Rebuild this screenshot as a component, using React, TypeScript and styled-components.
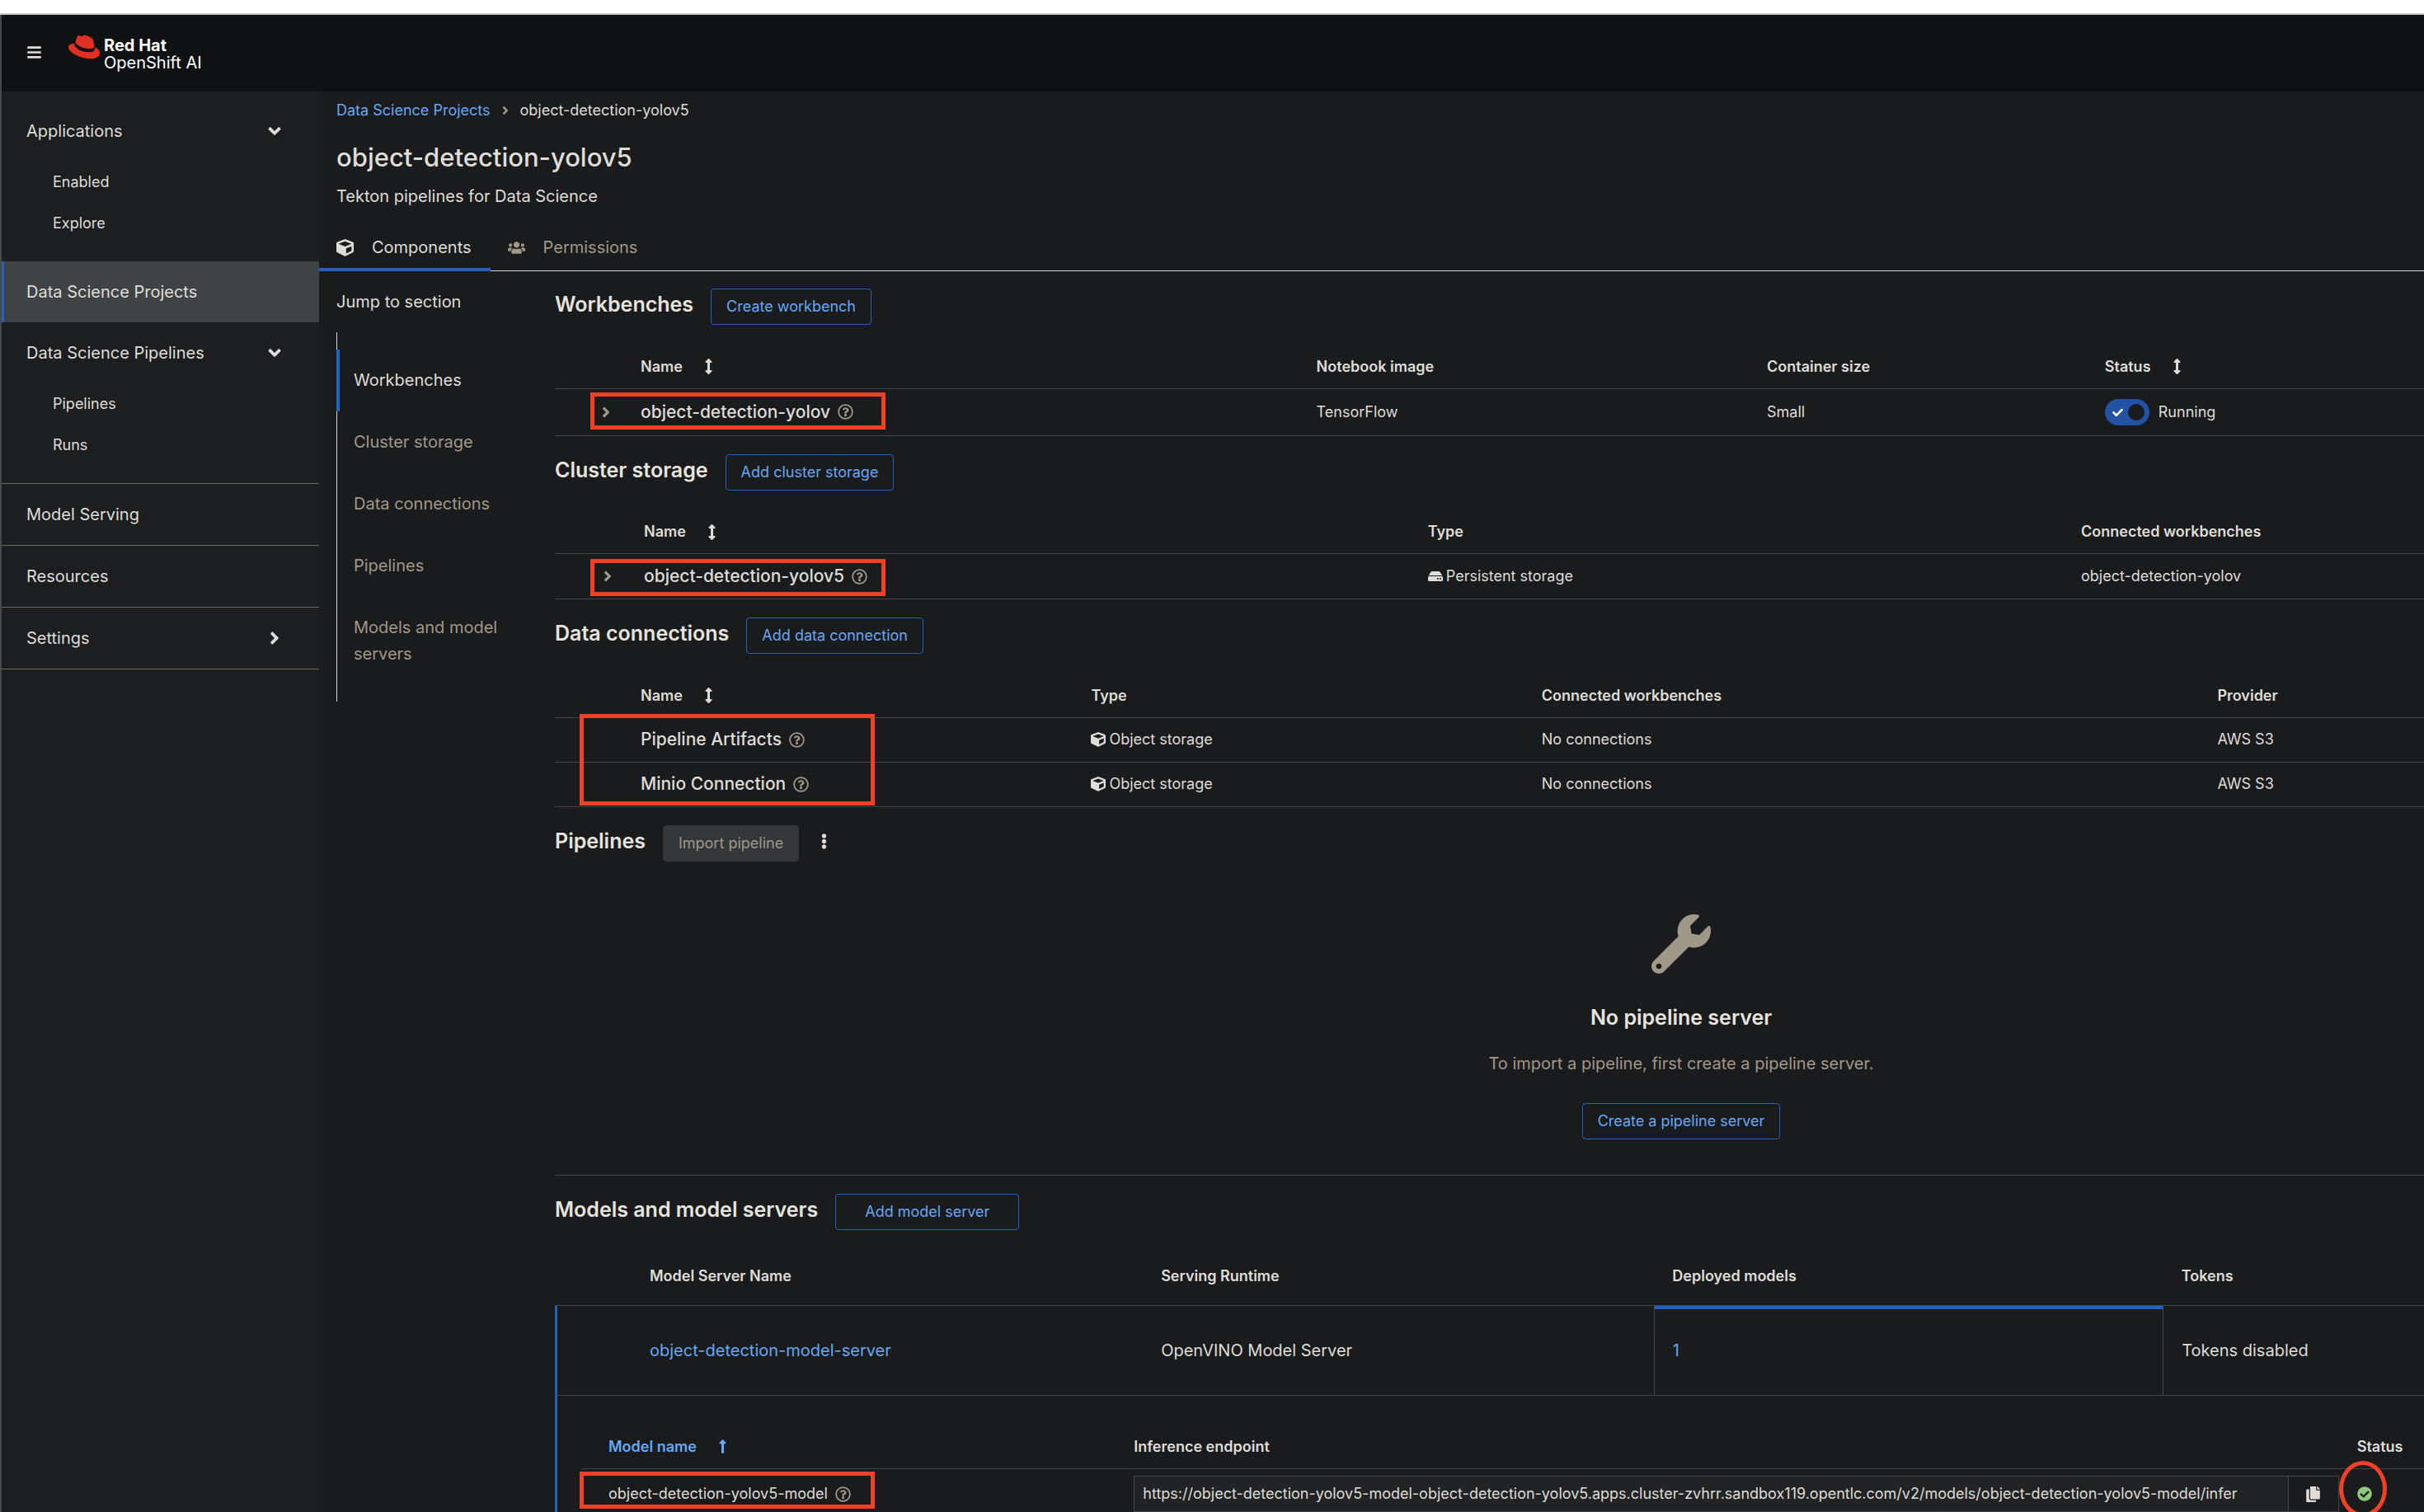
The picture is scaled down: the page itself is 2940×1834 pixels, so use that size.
import React from "react";
import styled, { createGlobalStyle, css } from "styled-components";
import {
  FaAngleDown,
  FaAngleRight,
  FaArrowsAltV,
  FaBars,
  FaCheck,
  FaCheckCircle,
  FaCopy,
  FaCube,
  FaEllipsisV,
  FaHdd,
  FaLongArrowAltUp,
  FaRedhat,
  FaRegQuestionCircle,
  FaUsers,
  FaWrench,
} from "react-icons/fa";

const color = {
  masthead: "#0f1113",
  sidebar: "#1c1e20",
  page: "#1a1b1d",
  selected: "#404345",
  text: "#dfddd8",
  heading: "#e6e4df",
  muted: "#a09889",
  link: "#66a8f5",
  accent: "#2560c0",
  line: "#434547",
  navLine: "#6c6b60",
  callout: "#ee4126",
  brand: "#e03023",
};

const size = { small: "18px", body: "20px", row: "21px", section: "25px", title: "31px" };

const GlobalStyle = createGlobalStyle`
  * { box-sizing: border-box; }
  body {
    margin: 0;
    background: ${color.page};
    color: ${color.text};
    font-family: Inter, "Liberation Sans", sans-serif;
    font-size: ${size.small};
    line-height: 28px;
  }
  button, input { font: inherit; color: inherit; }
  h1, h2, h3, p, ul, ol { margin: 0; padding: 0; font-weight: 400; }
  li { list-style: none; }
  a { color: inherit; text-decoration: none; }
  svg { display: block; flex: none; }
`;

const Window = styled.div`
  display: flex;
  flex-direction: column;
  height: 100vh;
  overflow: hidden;
`;

const TopStrip = styled.div`
  flex: none;
  height: 18px;
  background: #ffffff;
  border-bottom: 2px solid #c9cbcc;
`;

const Frame = styled.div`
  flex: 1;
  min-height: 0;
  display: flex;
  flex-direction: column;
  border-left: 2px solid #47494b;
`;

const Masthead = styled.header`
  flex: none;
  display: flex;
  align-items: flex-start;
  height: 93px;
  padding: 20px 30px;
  background: ${color.masthead};
`;

const PlainButton = styled.button`
  display: inline-flex;
  align-items: center;
  padding: 0;
  border: 0;
  background: none;
  cursor: pointer;
`;

const MenuButton = styled(PlainButton)`
  margin: 16px 32px 0 0;
`;

const Brand = styled.a`
  display: flex;
  gap: 5px;
  color: #ffffff;
  svg { color: ${color.brand}; }
`;

const BrandText = styled.span`
  display: flex;
  flex-direction: column;
  padding-top: 7px;
  font-size: ${size.body};
  line-height: 21px;
`;

const Body = styled.div`
  flex: 1;
  min-height: 0;
  display: flex;
`;

const Sidebar = styled.nav`
  flex: none;
  width: 385px;
  padding-top: 11px;
  background: ${color.sidebar};
  font-size: ${size.body};
`;

const NavEntry = styled.li<{ $divided?: boolean }>`
  border-bottom: ${(p) => (p.$divided ? `1px solid ${color.navLine}` : "0")};
`;

const navRow = css`
  display: flex;
  align-items: center;
  justify-content: space-between;
  width: 100%;
  height: 74px;
  padding: 0 42px 0 30px;
`;

const NavLink = styled.a<{ $selected?: boolean }>`
  ${navRow}
  ${(p) =>
    p.$selected &&
    css`
      background: ${color.selected};
      box-shadow: inset 3px 0 0 ${color.accent};
    `}
`;

const NavToggle = styled.button`
  ${navRow}
  border: 0;
  background: none;
  cursor: pointer;
`;

const SubNav = styled.ul`
  padding-bottom: 21px;
  font-size: ${size.small};
`;

const SubLink = styled.a`
  display: flex;
  align-items: center;
  height: 50px;
  padding-left: 62px;
`;

const Main = styled.main`
  flex: 1;
  min-width: 0;
  overflow: hidden;
`;

const PageHeader = styled.header`
  padding: 9px 21px 0;
`;

const Breadcrumb = styled.ol`
  display: flex;
  align-items: center;
  gap: 10px;
  li { display: flex; align-items: center; gap: 10px; }
  a { color: ${color.link}; }
  svg { color: ${color.muted}; }
`;

const Title = styled.h1`
  margin-top: 22px;
  font-size: ${size.title};
  line-height: 42px;
  font-weight: 500;
`;

const Description = styled.p`
  margin-top: 10px;
  font-size: ${size.body};
  line-height: 32px;
`;

const Tabs = styled.div`
  display: flex;
  margin-top: 21px;
  border-bottom: 1px solid #d8d8d8;
`;

const Tab = styled.button<{ $active?: boolean }>`
  display: flex;
  align-items: center;
  gap: 22px;
  height: 54px;
  margin-bottom: -1px;
  padding: 0 23px 0 21px;
  border: 0;
  border-bottom: 4px solid ${(p) => (p.$active ? color.accent : "transparent")};
  background: none;
  color: ${(p) => (p.$active ? color.text : color.muted)};
  font-size: ${size.body};
  cursor: pointer;
`;

const Content = styled.div`
  display: flex;
  padding: 21px 0 0 21px;
`;

const JumpLinks = styled.nav`
  flex: none;
  width: 265px;
  font-size: ${size.body};
  line-height: 32px;
`;

const JumpList = styled.ul`
  margin-top: 21px;
  padding: 21px 0 20px;
  width: 224px;
  box-shadow: inset 1px 0 0 #d8d8d8;
`;

const JumpLink = styled.a<{ $current?: boolean }>`
  display: block;
  padding: 21px 0 22px 17px;
  border-left: 4px solid ${(p) => (p.$current ? color.accent : "transparent")};
  color: ${(p) => (p.$current ? color.text : color.muted)};
`;

/* The sections run past the right edge of the viewport and are clipped there. */
const Sections = styled.div`
  flex: none;
  width: calc(100% + 200px);
  display: flex;
  flex-direction: column;
  gap: 22px;
`;

const Section = styled.section`
  position: relative;
`;

const SectionBar = styled.div`
  display: flex;
  align-items: flex-start;
  gap: 21px;
`;

const SectionTitle = styled.h2`
  color: ${color.heading};
  font-size: ${size.section};
  line-height: 38px;
  font-weight: 600;
`;

const OutlineButton = styled.button<{ $wide?: boolean }>`
  height: 44px;
  padding: 0 ${(p) => (p.$wide ? 35 : 18)}px;
  border: 1px solid ${color.accent};
  border-radius: 4px;
  background: none;
  color: ${color.link};
  cursor: pointer;
`;

const DisabledButton = styled(OutlineButton)`
  border-color: #33373a;
  background: #33373a;
  color: ${color.muted};
  cursor: default;
`;

const KebabButton = styled(PlainButton)`
  height: 40px;
`;

const Table = styled.table<{ $row: number }>`
  width: 100%;
  margin-top: 25px;
  table-layout: fixed;
  border-collapse: collapse;
  text-align: left;
  th { height: 52px; font-weight: 600; }
  td { height: ${(p) => p.$row}px; }
  th, td { padding: 0 0 0 21px; border-bottom: 1px solid ${color.line}; }
`;

const Inline = styled.span<{ $gap: number }>`
  display: flex;
  align-items: center;
  gap: ${(p) => p.$gap}px;
`;

const SortButton = styled(PlainButton)<{ $active?: boolean }>`
  display: flex;
  gap: 22px;
  font-weight: 600;
  color: ${(p) => (p.$active ? color.link : color.text)};
`;

const RowTitle = styled(Inline)`
  font-size: ${size.row};
  font-weight: 500;
`;

const HelpButton = styled(PlainButton)`
  color: ${color.muted};
`;

const ExpandButton = styled(PlainButton)`
  display: flex;
  width: 100%;
  justify-content: center;
  color: ${color.muted};
`;

const ToggleCell = styled.td`
  && { padding-left: 40px; }
`;

const SwitchLabel = styled.label`
  display: flex;
  align-items: center;
  gap: 11px;
`;

const SwitchBox = styled.span`
  position: relative;
  display: flex;
  svg { position: absolute; left: 9px; top: 10px; color: #ffffff; pointer-events: none; }
`;

const SwitchInput = styled.input`
  appearance: none;
  display: flex;
  align-items: center;
  justify-content: flex-end;
  width: 54px;
  height: 32px;
  margin: 0;
  padding: 0 6px;
  border-radius: 16px;
  background: #2152a3;
  &::before { content: ""; width: 20px; height: 20px; border-radius: 50%; background: ${color.page}; }
`;

const Callout = styled.div<{ $left: number; $top: number; $height: number }>`
  position: absolute;
  left: ${(p) => p.$left}px;
  top: ${(p) => p.$top}px;
  width: 358px;
  height: ${(p) => p.$height}px;
  border: 5px solid ${color.callout};
  pointer-events: none;
`;

const EmptyState = styled.div`
  display: flex;
  flex-direction: column;
  align-items: center;
  padding: 64px 0 43px;
  border-bottom: 1px solid ${color.line};
  svg { color: ${color.muted}; }
`;

const EmptyTitle = styled.h3`
  margin-top: 35px;
  color: ${color.heading};
  font-size: ${size.section};
  line-height: 36px;
  font-weight: 600;
`;

const EmptyText = styled.p`
  margin: 22px 0 32px;
  color: ${color.muted};
  font-size: ${size.body};
  line-height: 32px;
`;

const ServerTable = styled.table`
  width: 100%;
  margin-top: 23px;
  table-layout: fixed;
  border-collapse: collapse;
  text-align: left;
  th, td { padding: 0 0 0 22px; }
  > thead th { height: 69px; padding-bottom: 2px; font-weight: 600; }
`;

const ServerRow = styled.tr`
  border-top: 1px solid ${color.line};
  border-bottom: 1px solid ${color.line};
  font-size: ${size.body};
  > td { height: 109px; }
  > td:first-child { box-shadow: inset 3px 0 0 ${color.accent}; }
`;

const ActiveCell = styled.td`
  border-left: 1px solid ${color.line};
  border-right: 1px solid ${color.line};
  box-shadow: inset 0 4px 0 ${color.accent};
`;

const LinkText = styled.a`
  color: ${color.link};
`;

const ExpandedCell = styled.td`
  && { padding: 11px 32px 60px; }
  box-shadow: inset 3px 0 0 ${color.accent};
`;

const ModelTable = styled(Table)`
  th:first-child, td:first-child { padding-left: 33px; }
`;

const CopyField = styled.div`
  display: flex;
  height: 44px;
`;

const CopyInput = styled.input`
  flex: 1;
  min-width: 0;
  padding: 0 10px;
  border: 1px solid ${color.line};
  background: #212325;
`;

const CopyButton = styled(PlainButton)`
  width: 61px;
  justify-content: center;
  border: 1px solid ${color.line};
  border-left: 0;
`;

const StatusCell = styled.td`
  position: relative;
  svg { color: #8fca7c; }
`;

const CalloutRing = styled.div`
  position: absolute;
  left: 0;
  top: -10px;
  width: 58px;
  height: 68px;
  border: 5px solid ${color.callout};
  border-radius: 50%;
`;

const columns = {
  workbenches: ["83px", "30%", "20%", "15%", "auto"],
  storage: ["87px", "34.8%", "29%", "auto"],
  connections: ["83px", "20%", "20%", "30%", "auto"],
  servers: ["93px", "22.7%", "22.7%", "22.6%", "auto"],
  models: ["24.3%", "55.6%", "auto"],
};

function Columns({ widths }: { widths: string[] }) {
  return (
    <colgroup>
      {widths.map((width, i) => (
        <col key={i} style={{ width }} />
      ))}
    </colgroup>
  );
}

function Sortable({ label }: { label: string }) {
  return (
    <SortButton type="button">
      {label}
      <FaArrowsAltV size={19} />
    </SortButton>
  );
}

function Help() {
  return (
    <HelpButton type="button" aria-label="More info">
      <FaRegQuestionCircle size={19} />
    </HelpButton>
  );
}

function Named({ name }: { name: string }) {
  return (
    <RowTitle $gap={9}>
      {name}
      <Help />
    </RowTitle>
  );
}

function Expander() {
  return (
    <ToggleCell>
      <ExpandButton type="button" aria-label="Details">
        <FaAngleRight size={20} />
      </ExpandButton>
    </ToggleCell>
  );
}

function NavGroup({ label, items, divided }: { label: string; items: string[]; divided?: boolean }) {
  return (
    <NavEntry $divided={divided}>
      <NavToggle type="button" aria-expanded="true">
        {label}
        <FaAngleDown size={24} />
      </NavToggle>
      <SubNav>
        {items.map((item) => (
          <li key={item}>
            <SubLink href="#">{item}</SubLink>
          </li>
        ))}
      </SubNav>
    </NavEntry>
  );
}

export default function App() {
  return (
    <>
      <GlobalStyle />
      <Window>
        <TopStrip />
        <Frame>
          <Masthead>
            <MenuButton type="button" aria-label="Global navigation">
              <FaBars size={19} />
            </MenuButton>
            <Brand href="#">
              <FaRedhat size={38} />
              <BrandText>
                <b>Red Hat</b>
                <span>OpenShift AI</span>
              </BrandText>
            </Brand>
          </Masthead>
          <Body>
            <Sidebar>
              <ul>
                <NavGroup label="Applications" items={["Enabled", "Explore"]} />
                <NavEntry>
                  <NavLink href="#" $selected>Data Science Projects</NavLink>
                </NavEntry>
                <NavGroup label="Data Science Pipelines" items={["Pipelines", "Runs"]} divided />
                <NavEntry $divided>
                  <NavLink href="#">Model Serving</NavLink>
                </NavEntry>
                <NavEntry $divided>
                  <NavLink href="#">Resources</NavLink>
                </NavEntry>
                <NavEntry $divided>
                  <NavToggle type="button" aria-expanded="false">
                    Settings
                    <FaAngleRight size={24} />
                  </NavToggle>
                </NavEntry>
              </ul>
            </Sidebar>
            <Main>
              <PageHeader>
                <Breadcrumb>
                  <li>
                    <a href="#">Data Science Projects</a>
                    <FaAngleRight size={16} />
                  </li>
                  <li>object-detection-yolov5</li>
                </Breadcrumb>
                <Title>object-detection-yolov5</Title>
                <Description>Tekton pipelines for Data Science</Description>
              </PageHeader>
              <Tabs role="tablist">
                <Tab type="button" role="tab" aria-selected="true" $active>
                  <FaCube size={21} />
                  Components
                </Tab>
                <Tab type="button" role="tab" aria-selected="false">
                  <FaUsers size={21} />
                  Permissions
                </Tab>
              </Tabs>
              <Content>
                <JumpLinks>
                  <div>Jump to section</div>
                  <JumpList>
                    {["Workbenches", "Cluster storage", "Data connections", "Pipelines", "Models and model servers"].map(
                      (item, i) => (
                        <li key={item}>
                          <JumpLink href="#" $current={i === 0}>{item}</JumpLink>
                        </li>
                      ),
                    )}
                  </JumpList>
                </JumpLinks>
                <Sections>
                  <Section>
                    <SectionBar>
                      <SectionTitle>Workbenches</SectionTitle>
                      <OutlineButton type="button">Create workbench</OutlineButton>
                    </SectionBar>
                    <Table $row={57}>
                      <Columns widths={columns.workbenches} />
                      <thead>
                        <tr>
                          <th />
                          <th><Sortable label="Name" /></th>
                          <th>Notebook image</th>
                          <th>Container size</th>
                          <th><Sortable label="Status" /></th>
                        </tr>
                      </thead>
                      <tbody>
                        <tr>
                          <Expander />
                          <td><Named name="object-detection-yolov" /></td>
                          <td>TensorFlow</td>
                          <td>Small</td>
                          <td>
                            <SwitchLabel>
                              <SwitchBox>
                                <SwitchInput type="checkbox" defaultChecked />
                                <FaCheck size={13} />
                              </SwitchBox>
                              Running
                            </SwitchLabel>
                          </td>
                        </tr>
                      </tbody>
                    </Table>
                    <Callout $left={43} $top={126} $height={45} />
                  </Section>

                  <Section>
                    <SectionBar>
                      <SectionTitle>Cluster storage</SectionTitle>
                      <OutlineButton type="button">Add cluster storage</OutlineButton>
                    </SectionBar>
                    <Table $row={55}>
                      <Columns widths={columns.storage} />
                      <thead>
                        <tr>
                          <th />
                          <th><Sortable label="Name" /></th>
                          <th>Type</th>
                          <th>Connected workbenches</th>
                        </tr>
                      </thead>
                      <tbody>
                        <tr>
                          <Expander />
                          <td><Named name="object-detection-yolov5" /></td>
                          <td><Inline $gap={4}><FaHdd size={18} />Persistent storage</Inline></td>
                          <td>object-detection-yolov</td>
                        </tr>
                      </tbody>
                    </Table>
                    <Callout $left={43} $top={127} $height={45} />
                  </Section>

                  <Section>
                    <SectionBar>
                      <SectionTitle>Data connections</SectionTitle>
                      <OutlineButton type="button">Add data connection</OutlineButton>
                    </SectionBar>
                    <Table $row={54}>
                      <Columns widths={columns.connections} />
                      <thead>
                        <tr>
                          <th />
                          <th><Sortable label="Name" /></th>
                          <th>Type</th>
                          <th>Connected workbenches</th>
                          <th>Provider</th>
                        </tr>
                      </thead>
                      <tbody>
                        {["Pipeline Artifacts", "Minio Connection"].map((name) => (
                          <tr key={name}>
                            <td />
                            <td><Named name={name} /></td>
                            <td><Inline $gap={4}><FaCube size={18} />Object storage</Inline></td>
                            <td>No connections</td>
                            <td>AWS S3</td>
                          </tr>
                        ))}
                      </tbody>
                    </Table>
                    <Callout $left={30} $top={117} $height={111} />
                  </Section>

                  <Section>
                    <SectionBar>
                      <SectionTitle>Pipelines</SectionTitle>
                      <DisabledButton type="button" disabled>Import pipeline</DisabledButton>
                      <KebabButton type="button" aria-label="Pipeline actions">
                        <FaEllipsisV size={19} />
                      </KebabButton>
                    </SectionBar>
                    <EmptyState>
                      <FaWrench size={72} />
                      <EmptyTitle>No pipeline server</EmptyTitle>
                      <EmptyText>To import a pipeline, first create a pipeline server.</EmptyText>
                      <OutlineButton type="button">Create a pipeline server</OutlineButton>
                    </EmptyState>
                  </Section>

                  <Section>
                    <SectionBar>
                      <SectionTitle>Models and model servers</SectionTitle>
                      <OutlineButton type="button" $wide>Add model server</OutlineButton>
                    </SectionBar>
                    <ServerTable>
                      <Columns widths={columns.servers} />
                      <thead>
                        <tr>
                          <th />
                          <th>Model Server Name</th>
                          <th>Serving Runtime</th>
                          <th>Deployed models</th>
                          <th>Tokens</th>
                        </tr>
                      </thead>
                      <tbody>
                        <ServerRow>
                          <td />
                          <td><LinkText href="#">object-detection-model-server</LinkText></td>
                          <td>OpenVINO Model Server</td>
                          <ActiveCell><LinkText href="#">1</LinkText></ActiveCell>
                          <td>Tokens disabled</td>
                        </ServerRow>
                        <tr>
                          <ExpandedCell colSpan={5}>
                            <ModelTable $row={62}>
                              <Columns widths={columns.models} />
                              <thead>
                                <tr>
                                  <th>
                                    <SortButton type="button" $active>
                                      Model name
                                      <FaLongArrowAltUp size={19} />
                                    </SortButton>
                                  </th>
                                  <th>Inference endpoint</th>
                                  <th>Status</th>
                                </tr>
                              </thead>
                              <tbody>
                                <tr>
                                  <td>
                                    <Inline $gap={9}>
                                      object-detection-yolov5-model
                                      <Help />
                                    </Inline>
                                  </td>
                                  <td>
                                    <CopyField>
                                      <CopyInput
                                        readOnly
                                        aria-label="Inference endpoint"
                                        value="https://object-detection-yolov5-model-object-detection-yolov5.apps.cluster-zvhrr.sandbox119.opentlc.com/v2/models/object-detection-yolov5-model/infer"
                                      />
                                      <CopyButton type="button" aria-label="Copy">
                                        <FaCopy size={19} />
                                      </CopyButton>
                                    </CopyField>
                                  </td>
                                  <StatusCell>
                                    <FaCheckCircle size={18} />
                                    <CalloutRing />
                                  </StatusCell>
                                </tr>
                              </tbody>
                            </ModelTable>
                          </ExpandedCell>
                        </tr>
                      </tbody>
                    </ServerTable>
                    <Callout $left={30} $top={337} $height={45} />
                  </Section>
                </Sections>
              </Content>
            </Main>
          </Body>
        </Frame>
      </Window>
    </>
  );
}
